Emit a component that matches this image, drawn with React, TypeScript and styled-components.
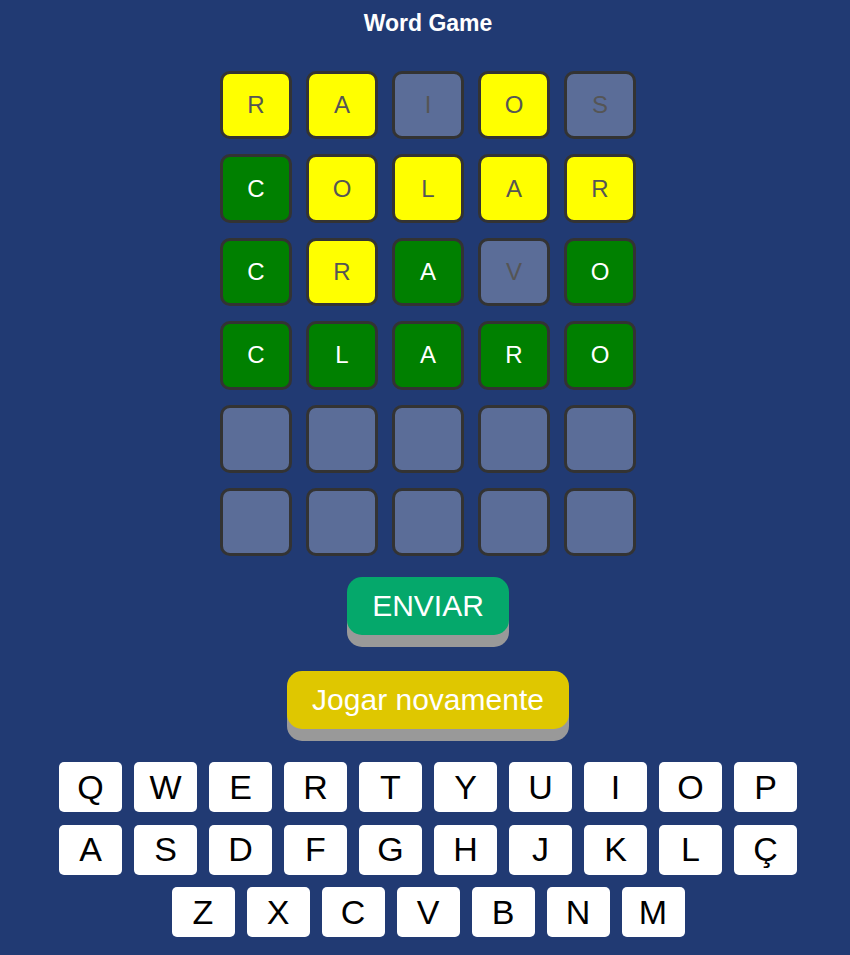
import styled, { createGlobalStyle } from 'styled-components';

type TileState = 'hit' | 'near' | 'miss' | 'empty';

const GlobalStyle = createGlobalStyle`
  html, body {
    margin: 0;
    padding: 0;
    background: #213a73;
    font-family: 'Liberation Sans', Arial, sans-serif;
  }
`;

const Page = styled.main`
  display: flex;
  flex-direction: column;
  align-items: center;
  padding-left: 6px;
  min-height: 955px;
  box-sizing: border-box;
`;

const Title = styled.h1`
  margin: 0;
  color: #fff;
  font-size: 23px;
  font-weight: 700;
  line-height: 47px;
`;

const Board = styled.div`
  display: grid;
  grid-template-columns: repeat(5, 72px);
  grid-auto-rows: 68.4px;
  column-gap: 14px;
  row-gap: 15px;
  margin-top: 24px;
`;

const tileBg: Record<TileState, string> = {
  hit: '#008000',
  near: '#ffff00',
  miss: '#5b6d98',
  empty: '#5b6d98',
};

const Tile = styled.div<{ $state: TileState }>`
  box-sizing: border-box;
  border: 3px solid #333;
  border-radius: 10px;
  background: ${(p) => tileBg[p.$state]};
  color: ${(p) => (p.$state === 'hit' ? '#fff' : '#555')};
  display: flex;
  align-items: center;
  justify-content: center;
  font-size: 24px;
`;

const ActionButton = styled.button<{ $bg: string }>`
  font-family: 'Liberation Sans', Arial, sans-serif;
  border: none;
  border-radius: 15px;
  background: ${(p) => p.$bg};
  box-shadow: 0 12px 0 #999;
  color: #fff;
  font-size: 30px;
  height: 58px;
  padding: 0;
  cursor: pointer;
`;

const Send = styled(ActionButton)`
  margin-top: 21px;
  width: 162px;
`;

const Again = styled(ActionButton)`
  margin-top: 36px;
  width: 282px;
`;

const Keyboard = styled.div`
  display: flex;
  flex-direction: column;
  align-items: center;
  gap: 12px;
  margin-top: 33px;
`;

const KeyRow = styled.div`
  display: flex;
  gap: 12px;

  & + & {
    margin-top: 0.5px;
  }
`;

const Key = styled.button`
  font-family: 'Liberation Sans', Arial, sans-serif;
  width: 63px;
  height: 50px;
  border: none;
  border-radius: 5px;
  background: #fff;
  color: #000;
  font-size: 34px;
  padding: 0;
  display: flex;
  align-items: center;
  justify-content: center;
  cursor: pointer;
`;

const guesses: [string, TileState][][] = [
  [['R', 'near'], ['A', 'near'], ['I', 'miss'], ['O', 'near'], ['S', 'miss']],
  [['C', 'hit'], ['O', 'near'], ['L', 'near'], ['A', 'near'], ['R', 'near']],
  [['C', 'hit'], ['R', 'near'], ['A', 'hit'], ['V', 'miss'], ['O', 'hit']],
  [['C', 'hit'], ['L', 'hit'], ['A', 'hit'], ['R', 'hit'], ['O', 'hit']],
];

const rows = [
  ...guesses,
  ...Array.from({ length: 2 }, () => Array.from({ length: 5 }, () => ['', 'empty'] as [string, TileState])),
];

const keys = ['QWERTYUIOP', 'ASDFGHJKLÇ', 'ZXCVBNM'];

export default function App() {
  return (
    <>
      <GlobalStyle />
      <Page>
        <Title>Word Game</Title>
        <Board>
          {rows.flatMap((row, r) =>
            row.map(([letter, state], c) => (
              <Tile key={`${r}-${c}`} $state={state}>
                {letter}
              </Tile>
            ))
          )}
        </Board>
        <Send $bg="#05a86b">ENVIAR</Send>
        <Again $bg="#dfc700">Jogar novamente</Again>
        <Keyboard>
          {keys.map((row) => (
            <KeyRow key={row}>
              {row.split('').map((k) => (
                <Key key={k}>{k}</Key>
              ))}
            </KeyRow>
          ))}
        </Keyboard>
      </Page>
    </>
  );
}
